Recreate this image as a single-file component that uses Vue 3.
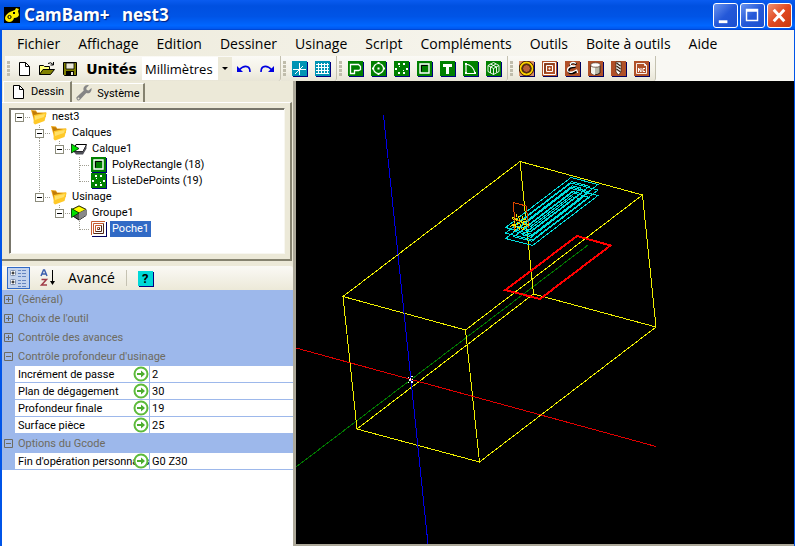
<template>
  <div class="window">
    <!-- shared icon shapes -->
    <svg class="defs" width="0" height="0" aria-hidden="true">
      <symbol id="i-new" viewBox="0 0 16 16">
        <path d="M3.5 1.5h6l4 4v9h-10z" fill="#fff" stroke="#000" />
        <path d="M9.5 1.5v4h4" fill="none" stroke="#000" />
      </symbol>
      <symbol id="i-open" viewBox="0 0 16 16">
        <path d="M.5 13.500v-9h4l1 1h5v3" fill="#ffff7a" stroke="#000" />
        <path d="M.5 13.500l3.500-5h11.500l-4 5z" fill="#808000" stroke="#000" />
        <path d="M9 2.500q3-2 5 1M14.500 1v3h-3" fill="none" stroke="#000" />
      </symbol>
      <symbol id="i-save" viewBox="0 0 16 16">
        <path d="M1.500 1.500h13v13h-12l-1-1z" fill="#808000" stroke="#000" />
        <path d="M4 2h8v6H4z" fill="#ece9d8" stroke="#000" stroke-width=".8" />
        <path d="M4 10h8v4H4z" />
        <path d="M9 11h2v3H9z" fill="#ece9d8" />
      </symbol>
      <symbol id="i-undo" viewBox="0 0 16 16">
        <path d="M1 5v6h6z" fill="#0000e0" />
        <path d="M3 9q5-5 9-3 2 1 2 5" fill="none" stroke="#0000e0" stroke-width="1.600" />
      </symbol>
      <symbol id="i-redo" viewBox="0 0 16 16">
        <path d="M15 5v6H9z" fill="#0000e0" />
        <path d="M13 9q-5-5-9-3-2 1-2 5" fill="none" stroke="#0000e0" stroke-width="1.600" />
      </symbol>
      <symbol id="i-axis" viewBox="0 0 16 16">
        <path d="M1 1h15v15H1z" fill="#000080" />
        <path d="M0 0h15v15H0z" fill="#0094b4" />
        <path d="M1 8.500h13M7.500 2v12M3 13l8-8" fill="none" stroke="#fff" />
      </symbol>
      <symbol id="i-grid" viewBox="0 0 16 16">
        <path d="M1 1h15v15H1z" fill="#000080" />
        <path d="M0 0h15v15H0z" fill="#0094b4" />
        <path
          d="M3.500 2v11M6.500 2v11M9.500 2v11M12.500 2v11M1 3.500h13M1 6.500h13M1 9.500h13M1 12.500h13"
          fill="none"
          stroke="#fff"
        />
      </symbol>
      <symbol id="i-green" viewBox="0 0 16 16">
        <path d="M1 1h15v15H1z" fill="#000080" />
        <path d="M0 0h15v15H0z" fill="#008000" />
      </symbol>
      <symbol id="i-poly" viewBox="0 0 16 16">
        <use href="#i-green" />
        <path d="M2.500 3.500h8l2 2v3l-2 1h-4v3h-4z" fill="none" stroke="#fff" stroke-width="1.300" />
      </symbol>
      <symbol id="i-circle" viewBox="0 0 16 16">
        <use href="#i-green" />
        <circle cx="7.500" cy="7.500" r="5" fill="none" stroke="#fff" stroke-width="1.200" />
        <path d="M6.500 6.500h2v2h-2zM6.500 1h2v2h-2zM6.500 12h2v2h-2zM1 6.500h2v2H1zM12 6.500h2v2h-2z" fill="#fff" />
      </symbol>
      <symbol id="i-points" viewBox="0 0 16 16">
        <use href="#i-green" />
        <path
          d="M4 2h2v2H4zM9 2h2v2H9zM1 7h2v2H1zM12 7h2v2h-2zM4 11h2v2H4zM9 11h2v2H9zM5 5h1v1H5zM9 9h1v1H9z"
          fill="#fff"
        />
      </symbol>
      <symbol id="i-rect" viewBox="0 0 16 16">
        <use href="#i-green" />
        <path d="M3 3h9v9H3z" fill="none" stroke="#fff" stroke-width="1.400" />
        <path d="M4.500 10.500v-6h6" fill="none" stroke="#000" />
      </symbol>
      <symbol id="i-text" viewBox="0 0 16 16">
        <use href="#i-green" />
        <path d="M3 3h9v3H9v7H6V6H3z" fill="#fff" />
      </symbol>
      <symbol id="i-arc" viewBox="0 0 16 16">
        <use href="#i-green" />
        <path d="M3 2.500v10M3 3q7 1 9 9M3 12.500h9" fill="none" stroke="#fff" stroke-width="1.200" />
        <path d="M2 2h2v2H2zM2 11h2v2H2zM11 11h2v2h-2z" fill="#fff" />
      </symbol>
      <symbol id="i-surface" viewBox="0 0 16 16">
        <use href="#i-green" />
        <path
          d="M7.500 1.500l5.500 3v6l-5.500 3-5.500-3v-6zM2 4.500l5.500 3 5.500-3M7.500 7.500v6M4.500 3l6 3v5.500M10 3L4.500 6v6"
          fill="none"
          stroke="#fff"
          stroke-width=".9"
        />
      </symbol>
      <symbol id="i-brown" viewBox="0 0 16 16">
        <path d="M1 1h15v15H1z" fill="#000060" />
        <path d="M0 0h15v15H0z" fill="#b05028" />
      </symbol>
      <symbol id="i-profile" viewBox="0 0 16 16">
        <use href="#i-brown" />
        <circle cx="7.500" cy="7.500" r="6" fill="none" stroke="#000" stroke-width="3" />
        <circle cx="7.500" cy="7.500" r="6" fill="none" stroke="#ffd000" stroke-width="1.800" />
        <circle cx="7.500" cy="7.500" r="4" fill="#b86038" stroke="#201000" stroke-width=".8" />
        <path d="M0 0h4L0 4zM15 0v4l-4-4zM0 15v-4l4 4zM15 15h-4l4-4z" fill="#d89068" />
      </symbol>
      <symbol id="i-pocket" viewBox="0 0 16 16">
        <use href="#i-brown" />
        <path d="M1.500 1.500h12v12h-12zM4.500 4.500h6v6h-6zM7 7h1v1H7z" fill="none" stroke="#fff" />
        <path d="M3 12V3h9" fill="none" stroke="#402010" stroke-width=".6" />
      </symbol>
      <symbol id="i-pocket-light" viewBox="0 0 16 16">
        <path d="M1 1h15v15H1z" fill="#000060" />
        <path d="M0 0h15v15H0z" fill="#fff" />
        <path d="M.5 14V.5H14M2.500 12.500v-10h10M4.500 10.500v-6h6M6.500 8.500v-2h2" fill="none" stroke="#c85c30" />
        <path d="M2.500 12.500h10v-10M4.500 10.500h6v-6M6.500 8.500h2v-2" fill="none" stroke="#502818" />
      </symbol>
      <symbol id="i-engrave" viewBox="0 0 16 16">
        <use href="#i-brown" />
        <path
          d="M11.500 3.500q-3-3-6 0-1 3 5 2.500-7 0-7 4 0 3 5 2l4-2"
          fill="none"
          stroke="#000"
          stroke-width="2"
        />
        <path d="M11 2.500q-3-2-5.500 0-1 3 5 2.500-8 0-8 4 0 3 5 2l4-2q1 1 1 3" fill="none" stroke="#fff" stroke-width="1.300" />
      </symbol>
      <symbol id="i-stock" viewBox="0 0 16 16">
        <use href="#i-brown" />
        <path d="M3 4v8q4 3.500 9 0V4z" fill="#b8b8a8" stroke="#000" stroke-width=".7" />
        <path d="M3 4v8q2 2 4 2V5z" fill="#f4f4ec" />
        <ellipse cx="7.500" cy="4" rx="4.800" ry="2.200" fill="#fff" stroke="#604030" stroke-width=".8" />
      </symbol>
      <symbol id="i-drill" viewBox="0 0 16 16">
        <use href="#i-brown" />
        <path d="M5 1h5v10l-2.500 3L5 11z" fill="#fff" stroke="#302010" stroke-width=".7" />
        <path d="M5.500 2l4 3M5.500 5l4 3M5.500 8l4 3" stroke="#302010" stroke-width="1.300" />
      </symbol>
      <symbol id="i-nc" viewBox="0 0 16 16">
        <use href="#i-brown" />
        <path d="M2.500 2.500h8l2 2v8h-10zM10.500 2.500v2h2" fill="none" stroke="#fff" stroke-width=".9" />
        <path d="M4.500 11V7l2.500 4V7M11 7.500H9v3h2" fill="none" stroke="#fff" />
      </symbol>
      <symbol id="i-wrench" viewBox="0 0 16 16">
        <path
          d="M15.500 3l-2.800 2.500-2-.5-.4-2L13 .3Q9.500-.5 8 2q-1 1.500-.3 3.500L.5 12.300Q0 14 1.500 15.200q1.500.8 2.500-.4L10.300 8q2 .8 3.900-.6Q16 5.500 15.500 3z"
          fill="#858585"
        />
        <circle cx="2.500" cy="13.400" r="1" fill="#ece9d8" />
      </symbol>
      <symbol id="i-folder" viewBox="0 0 16 16">
        <path d="M0 1l5 .5 1 2h9v4L4 15z" fill="#f0a818" />
        <path d="M1 2l4 .5 1 1.500h8v2L5 14z" fill="#c27c08" />
        <path d="M3 6l12-2.500q.8 0 .5 1L13.500 12 4 15.500 2.500 14z" fill="#ffc928" />
        <path d="M4 7l10-2-1 3-9 3z" fill="#ffe068" />
      </symbol>
      <symbol id="i-layer" viewBox="0 0 16 16">
        <path d="M5 3.500h10.500l-3.500 7H2z" fill="#fff" stroke="#000" />
        <path d="M2.500 10.500h9.500l3.500-7v4l-3.500 6H5z" fill="#505058" />
        <path d="M.5 3v9L8 7.500z" fill="#00e000" stroke="#002000" stroke-width=".8" />
      </symbol>
      <symbol id="i-part" viewBox="0 0 16 16">
        <path d="M1 4.500l7-3.500 7 3.500v6L8 15l-7-4.500z" fill="#505050" stroke="#000" />
        <path d="M1 4.500L8 1l7 3.500L8 8z" fill="#ffff00" stroke="#303000" stroke-width=".8" />
        <path d="M8 8l7-3.500v6L8 15z" fill="#888" />
        <path d="M.5 3.500v9L8 8z" fill="#00e000" stroke="#003000" stroke-width=".8" />
      </symbol>
      <symbol id="i-arrow" viewBox="0 0 16 16">
        <circle cx="8" cy="8" r="6.500" fill="#fff" stroke="#5dbb3b" stroke-width="2" />
        <path d="M4 7h4V4.500L12 8l-4 3.500V9H4z" fill="#4cad2e" />
      </symbol>
      <symbol id="i-categorized" viewBox="0 0 18 18">
        <g fill="#fff" stroke="#7b8cab">
          <rect x=".5" y="1.500" width="5" height="5" rx="1" />
          <rect x=".5" y="10.500" width="5" height="5" rx="1" />
        </g>
        <path d="M1.500 4h3M3 2.500v3M1.500 13h3M3 11.500v3" stroke="#000" />
        <path
          d="M8 1.500h3M12 1.500h4M8 4.500h3M12 4.500h4M8 7.500h3M12 7.500h4M8 11.500h3M12 11.500h4M8 14.500h3M12 14.500h4M8 17.500h3M12 17.500h4"
          stroke="#6585c0"
        />
      </symbol>
      <symbol id="i-sort" viewBox="0 0 18 18">
        <path d="M2 7l2.500-6h1L8 7M3 5h4" fill="none" stroke="#3c5fae" stroke-width="1.500" />
        <path d="M2.500 10.500h5l-5 5.500H8" fill="none" stroke="#a03c48" stroke-width="1.500" />
        <path d="M13.500 1v13" stroke="#000" />
        <path d="M11 12h5l-2.500 4z" />
      </symbol>
    </svg>

    <header class="title-bar">
      <svg class="logo" width="16" height="16" viewBox="0 0 16 16">
        <path d="M0 0h16v16H0z" fill="#000" />
        <path d="M7 4.500L11 3l1-2 3 1-1 2 1 4q-1 3-5 3-1 4-5 4-4-.5-4-4 .5-4 6-6.500z" fill="#ffee00" />
        <circle cx="5.500" cy="10" r="1.600" fill="#ffee00" stroke="#000" />
        <path d="M9 5h2v2H9z" />
      </svg>
      <h1>CamBam+ <span>nest3</span></h1>
      <div class="window-buttons">
        <button type="button" aria-label="Réduire">
          <svg viewBox="0 0 24 24"><path d="M5 17h9v3H5z" fill="#fff" /></svg>
        </button>
        <button type="button" aria-label="Agrandir">
          <svg viewBox="0 0 24 24">
            <path d="M5 5h13v13H5zM6.500 8v8.500h10V8z" fill="#fff" fill-rule="evenodd" />
          </svg>
        </button>
        <button type="button" class="close" aria-label="Fermer">
          <svg viewBox="0 0 24 24"><path d="M6 6l11 12M17 6L6 18" stroke="#fff" stroke-width="3" /></svg>
        </button>
      </div>
    </header>

    <div class="frame">
      <nav class="menu">
        <a v-for="item in menu" :key="item" href="#">{{ item }}</a>
      </nav>

      <div class="toolbar">
        <div class="group">
          <i class="grip"></i>
          <button v-for="t in fileTools" :key="t.icon" type="button" class="tool" :aria-label="t.label">
            <svg><use :href="'#' + t.icon" /></svg>
          </button>
          <label for="units">Unités</label>
          <div class="select">
            <select id="units" v-model="units">
              <option>Millimètres</option>
              <option>Pouces</option>
            </select>
            <i class="caret"></i>
          </div>
          <button v-for="t in historyTools" :key="t.icon" type="button" class="tool" :aria-label="t.label">
            <svg><use :href="'#' + t.icon" /></svg>
          </button>
        </div>
        <div v-for="(group, n) in toolGroups" :key="n" class="group">
          <i class="grip"></i>
          <button v-for="t in group" :key="t.icon" type="button" class="tool" :aria-label="t.label">
            <svg><use :href="'#' + t.icon" /></svg>
          </button>
        </div>
      </div>

      <div class="body">
        <aside class="side">
          <div class="tabs">
            <button type="button" class="tab" :class="{ active: tab === 'draw' }" @click="tab = 'draw'">
              <svg><use href="#i-new" /></svg>Dessin
            </button>
            <button type="button" class="tab" :class="{ active: tab === 'system' }" @click="tab = 'system'">
              <svg><use href="#i-wrench" /></svg>Système
            </button>
          </div>
          <div class="tab-page">
            <ul class="tree">
              <li v-for="node in tree" :key="node.name">
                <svg v-for="(cell, n) in node.cells" :key="n" class="cell" viewBox="0 0 20 16">
                  <path v-if="lines[cell]" :d="lines[cell]" class="dots" />
                  <template v-if="cell.startsWith('box')">
                    <rect x="5.500" y="4.500" width="8" height="8" fill="#fff" stroke="#8c8c7c" />
                    <path d="M7 8.500h5" stroke="#000" />
                  </template>
                </svg>
                <svg class="node-icon"><use :href="'#' + node.icon" /></svg>
                <span class="node-name" :class="{ selected: node.name === selected }" @click="selected = node.name">{{
                  node.name
                }}</span>
              </li>
            </ul>
          </div>

          <div class="prop-bar">
            <button type="button" class="prop-tool pressed" aria-label="Par catégorie">
              <svg><use href="#i-categorized" /></svg>
            </button>
            <button type="button" class="prop-tool" aria-label="Alphabétique">
              <svg><use href="#i-sort" /></svg>
            </button>
            <button type="button" class="advanced">Avancé</button>
            <button type="button" class="help"><b>?</b></button>
          </div>

          <div class="prop-grid">
            <table>
              <colgroup>
                <col class="col-gutter" />
                <col class="col-name" />
                <col />
              </colgroup>
              <tbody v-for="cat in categories" :key="cat.name">
                <tr class="category">
                  <td>
                    <button type="button" :aria-label="cat.name" @click="cat.open = !cat.open">
                      <svg viewBox="0 0 9 9">
                        <path d="M.5.5h8v8h-8zM2 4.500h5" />
                        <path v-if="!cat.open" d="M4.500 2v5" />
                      </svg>
                    </button>
                  </td>
                  <th colspan="2">{{ cat.name }}</th>
                </tr>
                <template v-if="cat.open">
                  <tr v-for="prop in cat.props" :key="prop.id" class="prop">
                    <td></td>
                    <th>
                      <div class="name">
                        <label :for="prop.id">{{ prop.name }}</label>
                        <svg><use href="#i-arrow" /></svg>
                      </div>
                    </th>
                    <td class="value"><input :id="prop.id" v-model="prop.value" type="text" /></td>
                  </tr>
                </template>
              </tbody>
            </table>
          </div>
        </aside>

        <main class="scene">
          <svg viewBox="296 81 498 463" preserveAspectRatio="xMinYMin slice">
            <g fill="none" shape-rendering="crispEdges">
              <path d="M296 467L588 245" stroke="#007800" />
              <path
                d="M343 296.500L520 161.500L642.500 195L465.500 330zM357 429L533.500 294L656 327L479.500 462zM343 296.500L357 429M520 161.500L533.500 294M642.500 195L656 327M465.500 330L479.500 462"
                stroke="#f0f000"
              />
              <path d="M296 348L656 446.500" stroke="#e00000" />
              <path d="M383.500 115L428 544" stroke="#0000e8" />
              <path v-for="(d, n) in toolpath" :key="n" :d="d" stroke="#00dede" />
              <path d="M505.500 290L577 236L610.500 245.500L540 299z" stroke="#ff0000" stroke-width="2" />
              <path d="M515 230L513.500 202.500L526 206L529 228M514 218l14 8" stroke="#e04800" />
              <path
                d="M512 217l5 3 2-4 1 6 5-3-2 5 6 1-6 2 1 3-5-3-4 3 1-5-5 1 4-4zM516 214l2 13M523 216l-4 14M513 225l14-4"
                stroke="#f4e800"
                stroke-dasharray="3 1"
              />
            </g>
            <path
              d="M408 377h1v1h-1zM411 376h2v1h-2zM409 379h2v2h-2zM412 379h1v1h-1zM408 382h1v1h-1zM411 381h2v2h-2zM410 378h1v1h-1z"
              fill="#fff"
            />
          </svg>
        </main>
      </div>
    </div>
  </div>
</template>

<script setup>
import { ref } from 'vue';

const menu = [
  'Fichier',
  'Affichage',
  'Edition',
  'Dessiner',
  'Usinage',
  'Script',
  'Compléments',
  'Outils',
  'Boite à outils',
  'Aide',
];

// toolbar
const units = ref('Millimètres');
const fileTools = [
  { icon: 'i-new', label: 'Nouveau' },
  { icon: 'i-open', label: 'Ouvrir' },
  { icon: 'i-save', label: 'Enregistrer' },
];
const historyTools = [
  { icon: 'i-undo', label: 'Annuler' },
  { icon: 'i-redo', label: 'Rétablir' },
];
const toolGroups = [
  [
    { icon: 'i-axis', label: 'Axes' },
    { icon: 'i-grid', label: 'Grille' },
  ],
  [
    { icon: 'i-poly', label: 'Polyligne' },
    { icon: 'i-circle', label: 'Cercle' },
    { icon: 'i-points', label: 'Liste de points' },
    { icon: 'i-rect', label: 'Rectangle' },
    { icon: 'i-text', label: 'Texte' },
    { icon: 'i-arc', label: 'Arc' },
    { icon: 'i-surface', label: 'Surface' },
  ],
  [
    { icon: 'i-profile', label: 'Contour' },
    { icon: 'i-pocket', label: 'Poche' },
    { icon: 'i-engrave', label: 'Gravure' },
    { icon: 'i-stock', label: 'Profil 3D' },
    { icon: 'i-drill', label: 'Perçage' },
    { icon: 'i-nc', label: 'Fichier NC' },
  ],
];

// drawing tree, each cell is one indent column
const tab = ref('draw');
const selected = ref('Poche1');
const lines = {
  boxRoot: 'M15 8.500h6',
  boxMid: 'M9.500 0v4M9.500 13v3M15 8.500h6',
  boxEnd: 'M9.500 0v4M15 8.500h6',
  line: 'M9.500 0v16',
  tee: 'M9.500 0v16M10 8.500h11',
  end: 'M9.500 0v9M10 8.500h11',
};
const tree = [
  { name: 'nest3', icon: 'i-folder', cells: ['boxRoot'] },
  { name: 'Calques', icon: 'i-folder', cells: ['none', 'boxMid'] },
  { name: 'Calque1', icon: 'i-layer', cells: ['none', 'line', 'boxEnd'] },
  { name: 'PolyRectangle (18)', icon: 'i-rect', cells: ['none', 'line', 'none', 'tee'] },
  { name: 'ListeDePoints (19)', icon: 'i-points', cells: ['none', 'line', 'none', 'end'] },
  { name: 'Usinage', icon: 'i-folder', cells: ['none', 'boxEnd'] },
  { name: 'Groupe1', icon: 'i-part', cells: ['none', 'none', 'boxEnd'] },
  { name: 'Poche1', icon: 'i-pocket-light', cells: ['none', 'none', 'none', 'end'] },
];

// property grid
const categories = ref([
  { name: '(Général)', open: false, props: [] },
  { name: "Choix de l'outil", open: false, props: [] },
  { name: 'Contrôle des avances', open: false, props: [] },
  {
    name: "Contrôle profondeur d'usinage",
    open: true,
    props: [
      { id: 'step', name: 'Incrément de passe', value: '2' },
      { id: 'clearance', name: 'Plan de dégagement', value: '30' },
      { id: 'depth', name: 'Profondeur finale', value: '19' },
      { id: 'surface', name: 'Surface pièce', value: '25' },
    ],
  },
  {
    name: 'Options du Gcode',
    open: true,
    props: [{ id: 'footer', name: "Fin d'opération personnalisée", value: 'G0 Z30' }],
  },
]);

// pocket toolpath: nested loops on three depth levels
const corner = (u, v, dy) => `${(505.5 + u * 27 + v * 65.5).toFixed(1)} ${(227.5 + u * 7 - v * 50 + dy).toFixed(1)}`;
const toolpath = [];
[0, 5.5, 11].forEach((dy) => {
  [0, 0.17, 0.34].forEach((t) => {
    const s = t * 0.35;
    toolpath.push(
      `M${corner(t, s, dy)}L${corner(t, 1 - s, dy)}L${corner(1 - t, 1 - s, dy)}L${corner(1 - t, s, dy)}z`
    );
  });
});
</script>

<style>
body {
  margin: 0;
  background: #fff;
}
</style>

<style scoped>
.window {
  display: flex;
  flex-direction: column;
  height: 100vh;
  overflow: hidden;
  color: #000;
  font-family: Roboto, 'Liberation Sans', sans-serif;
  font-size: 11px;
}
.defs {
  position: absolute;
}
button,
input,
select {
  margin: 0;
  padding: 0;
  border: 0;
  background: none;
  color: inherit;
  font: inherit;
}
svg {
  display: block;
  flex: none;
}

/* title bar */
.title-bar {
  display: flex;
  align-items: center;
  height: 30px;
  flex: none;
  padding: 0 3px 0 4px;
  background: linear-gradient(#0a5cf0 0, #0050e0 20%, #0054e6 55%, #0066ff 85%, #0058f0 95%, #0040c8 100%);
}
h1 {
  flex: 1;
  margin: 0 0 0 4px;
  color: #fff;
  font-family: 'Noto Sans', sans-serif;
  font-size: 17px;
  font-weight: 700;
  line-height: 28px;
  text-shadow: 1px 1px 1px #00207c;
}
h1 span {
  margin-left: 8px;
}
.window-buttons {
  display: flex;
  gap: 2px;
}
.window-buttons button {
  width: 25px;
  height: 25px;
  box-sizing: border-box;
  border: 1px solid #fff;
  border-radius: 3px;
  background: linear-gradient(135deg, #6a94f0, #2458d8 50%, #1c50d0);
}
.window-buttons .close {
  background: linear-gradient(135deg, #f09070, #e04820 50%, #c83810);
}
.window-buttons svg {
  width: 23px;
  height: 23px;
}

.frame {
  display: flex;
  flex-direction: column;
  flex: 1;
  min-height: 0;
  border-left: 2px solid #0054e8;
  border-right: 1px solid #0054e8;
  background: linear-gradient(90deg, #ece9d8, #f9f8f3 80%);
}

/* menu */
.menu {
  display: flex;
  gap: 18px;
  height: 26px;
  flex: none;
  padding-left: 15px;
  font-family: 'Open Sans', sans-serif;
  font-size: 14px;
  line-height: 28px;
  white-space: nowrap;
}
.menu a {
  color: #000;
  text-decoration: none;
}

/* toolbar */
.toolbar {
  display: flex;
  height: 25px;
  flex: none;
  padding-left: 3px;
}
.group {
  display: flex;
  align-items: center;
  box-sizing: border-box;
  padding: 0 2px;
  border-right: 1px solid #c4c1b0;
  border-radius: 0 0 3px 0;
  background: linear-gradient(#fbfaf6, #f3f1e6 60%, #e8e5d6);
}
.grip {
  width: 3px;
  height: 15px;
  margin-right: 2px;
  background: repeating-linear-gradient(#c0bdac 0 3px, transparent 3px 4px);
}
.tool {
  display: flex;
  align-items: center;
  justify-content: center;
  width: 23px;
  height: 24px;
}
.tool svg {
  width: 16px;
  height: 16px;
}
.group label {
  width: 61px;
  text-align: center;
  font-family: 'DejaVu Sans', sans-serif;
  font-size: 14px;
  font-weight: 700;
}
.select {
  display: flex;
  position: relative;
  width: 90px;
  height: 23px;
  background: linear-gradient(90deg, #fff 76px, #ece9d8 76px);
}
.select select {
  width: 100%;
  padding: 0 0 0 3px;
  appearance: none;
  outline: 0;
  font-family: 'Open Sans', sans-serif;
  font-size: 13px;
}
.caret {
  position: absolute;
  top: 10px;
  right: 4px;
  border: 3px solid transparent;
  border-top-color: #000;
  border-bottom: 0;
  pointer-events: none;
}

.body {
  display: flex;
  flex: 1;
  min-height: 0;
}
.side {
  display: flex;
  flex-direction: column;
  width: 291px;
  flex: none;
  border-right: 3px solid #aca899;
  background: #ece9d8;
}

/* tabs */
.tabs {
  display: flex;
  align-items: flex-end;
  height: 21px;
  padding-left: 1px;
}
.tab {
  display: flex;
  align-items: center;
  gap: 5px;
  height: 19px;
  padding: 0 4px;
  border-top: 1px solid #fff;
  border-right: 2px solid #85826f;
}
.tab.active {
  height: 21px;
  padding: 0 6px 1px;
  border-left: 1px solid #fff;
}
.tab svg {
  width: 16px;
  height: 16px;
}
.tab-page {
  margin-right: 1px;
  padding: 5px 5px 5px 7px;
  border-top: 1px solid #fff;
  border-right: 2px solid #85826f;
  border-bottom: 2px solid #85826f;
}
.tree {
  height: 146px;
  box-sizing: border-box;
  margin: 0;
  padding: 0;
  list-style: none;
  border: 1px solid #f8f7f1;
  border-top-color: #77756a;
  border-left-color: #77756a;
  background: #fff;
  box-shadow: inset 1px 1px 0 #77756a;
}
.tree li {
  display: flex;
  align-items: center;
  height: 16px;
}
.cell {
  width: 20px;
  height: 16px;
}
.dots {
  fill: none;
  stroke: #a09e92;
  stroke-dasharray: 1 1;
}
.node-icon {
  width: 16px;
  height: 16px;
  margin-left: 1px;
}
.node-name {
  margin-left: 3px;
  padding: 0 2px;
  line-height: 16px;
  white-space: nowrap;
}
.node-name.selected {
  background: #316ac5;
  color: #fff;
}

/* property toolbar */
.prop-bar {
  display: flex;
  align-items: center;
  height: 24px;
  margin-top: 5px;
  padding-left: 5px;
  border-radius: 0 3px 3px 0;
  background: linear-gradient(#faf9f5, #ece9d8);
}
.prop-tool {
  display: flex;
  align-items: center;
  justify-content: center;
  width: 23px;
  height: 22px;
  margin-right: 6px;
}
.prop-tool.pressed {
  box-sizing: border-box;
  border: 1px solid #316ac5;
  background: #c3d3ed;
}
.prop-tool svg {
  width: 18px;
  height: 18px;
}
.advanced {
  padding: 0 11px 0 3px;
  border-right: 1px solid #c5c2b2;
  font-family: 'Open Sans', sans-serif;
  font-size: 14px;
  line-height: 16px;
}
.help {
  width: 15px;
  height: 15px;
  margin-left: 11px;
  background: #00d8d8;
  box-shadow: 1px 1px 0 #000080;
  font-size: 13px;
  line-height: 15px;
}

/* property grid */
.prop-grid {
  flex: 1;
  background: #fff;
}
table {
  width: 100%;
  table-layout: fixed;
  border-collapse: separate;
  border-spacing: 0;
  background: #9db8eb;
}
.col-gutter {
  width: 13px;
}
.col-name {
  width: 135px;
}
th,
td {
  padding: 0;
  font-weight: 400;
  text-align: left;
  white-space: nowrap;
}
.category td,
.category th {
  height: 18px;
  padding-bottom: 1px;
  color: #6d6b60;
}
.category .category th,
.category th {
  padding-left: 3px;
}
.category button {
  display: block;
  margin-left: 2px;
}
.category svg {
  width: 9px;
  height: 9px;
  fill: none;
  stroke: #6d6b60;
}
.prop th,
.prop .value {
  height: 16px;
  border-bottom: 1px solid #9db8eb;
  background: #fff;
}
.prop th {
  border-right: 1px solid #9db8eb;
}
.name {
  display: flex;
  position: relative;
  align-items: center;
  height: 16px;
  padding-left: 3px;
  overflow: hidden;
}
/* the link badge sits over the end of long names */
.name svg {
  position: absolute;
  top: 0;
  right: 0;
  width: 16px;
  height: 16px;
}
.value input {
  display: block;
  width: 100%;
  height: 16px;
  box-sizing: border-box;
  padding-left: 2px;
  outline: 0;
}

/* 3D view */
.scene {
  flex: 1;
  min-width: 0;
  border-bottom: 2px solid #aca899;
  background: #000;
}
.scene svg {
  width: 100%;
  height: 100%;
}
</style>
